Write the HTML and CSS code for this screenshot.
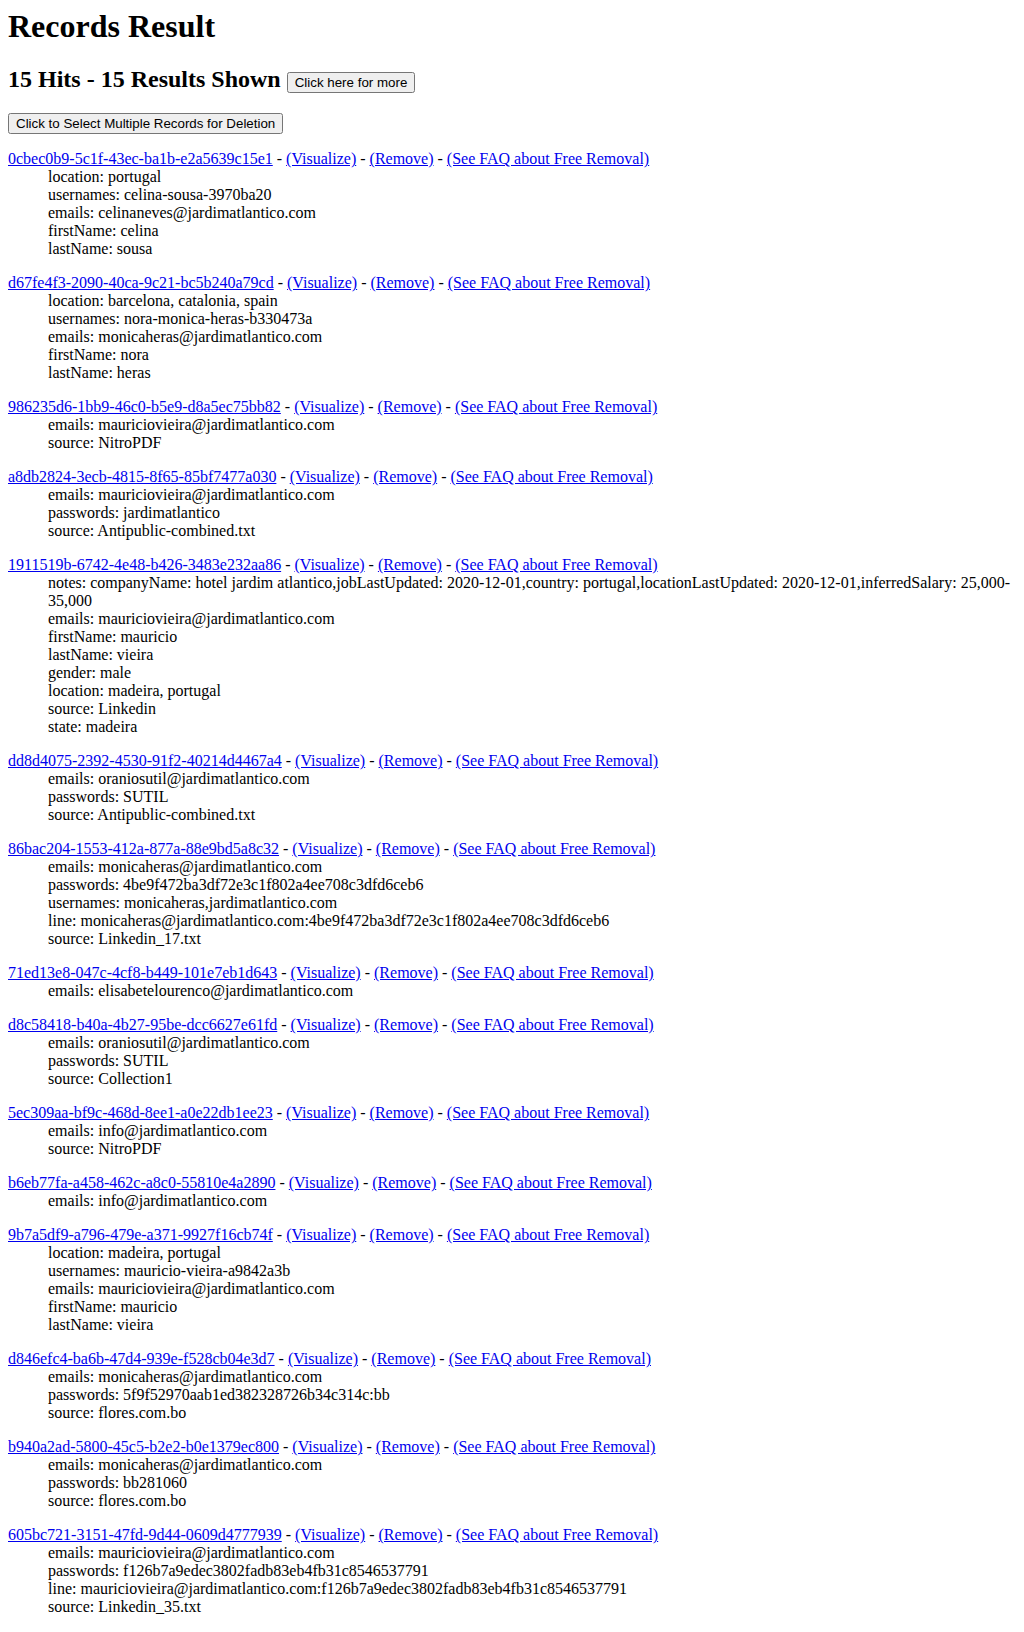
FILE: index.html
```html
<!DOCTYPE html>
<html>
<head>
<meta charset="utf-8">
<title>Records Result</title>
<link rel="stylesheet" href="styles.css">
</head>
<body>
<h1 class="title">Records Result</h1>
<h2 class="hits">15 Hits - 15 Results Shown <button class="btn">Click here for more</button></h2>
<div class="actions"><button class="btn">Click to Select Multiple Records for Deletion</button></div>

<dl class="record">
<dt><a href="#">0cbec0b9-5c1f-43ec-ba1b-e2a5639c15e1</a> - <a href="#">(Visualize)</a> - <a href="#">(Remove)</a> - <a href="#">(See FAQ about Free Removal)</a></dt>
<dd>location: portugal</dd>
<dd>usernames: celina-sousa-3970ba20</dd>
<dd>emails: celinaneves@jardimatlantico.com</dd>
<dd>firstName: celina</dd>
<dd>lastName: sousa</dd>
</dl>

<dl class="record">
<dt><a href="#">d67fe4f3-2090-40ca-9c21-bc5b240a79cd</a> - <a href="#">(Visualize)</a> - <a href="#">(Remove)</a> - <a href="#">(See FAQ about Free Removal)</a></dt>
<dd>location: barcelona, catalonia, spain</dd>
<dd>usernames: nora-monica-heras-b330473a</dd>
<dd>emails: monicaheras@jardimatlantico.com</dd>
<dd>firstName: nora</dd>
<dd>lastName: heras</dd>
</dl>

<dl class="record">
<dt><a href="#">986235d6-1bb9-46c0-b5e9-d8a5ec75bb82</a> - <a href="#">(Visualize)</a> - <a href="#">(Remove)</a> - <a href="#">(See FAQ about Free Removal)</a></dt>
<dd>emails: mauriciovieira@jardimatlantico.com</dd>
<dd>source: NitroPDF</dd>
</dl>

<dl class="record">
<dt><a href="#">a8db2824-3ecb-4815-8f65-85bf7477a030</a> - <a href="#">(Visualize)</a> - <a href="#">(Remove)</a> - <a href="#">(See FAQ about Free Removal)</a></dt>
<dd>emails: mauriciovieira@jardimatlantico.com</dd>
<dd>passwords: jardimatlantico</dd>
<dd>source: Antipublic-combined.txt</dd>
</dl>

<dl class="record">
<dt><a href="#">1911519b-6742-4e48-b426-3483e232aa86</a> - <a href="#">(Visualize)</a> - <a href="#">(Remove)</a> - <a href="#">(See FAQ about Free Removal)</a></dt>
<dd>notes: companyName: hotel jardim atlantico,jobLastUpdated: 2020-12-01,country: portugal,locationLastUpdated: 2020-12-01,inferredSalary: 25,000-35,000</dd>
<dd>emails: mauriciovieira@jardimatlantico.com</dd>
<dd>firstName: mauricio</dd>
<dd>lastName: vieira</dd>
<dd>gender: male</dd>
<dd>location: madeira, portugal</dd>
<dd>source: Linkedin</dd>
<dd>state: madeira</dd>
</dl>

<dl class="record">
<dt><a href="#">dd8d4075-2392-4530-91f2-40214d4467a4</a> - <a href="#">(Visualize)</a> - <a href="#">(Remove)</a> - <a href="#">(See FAQ about Free Removal)</a></dt>
<dd>emails: oraniosutil@jardimatlantico.com</dd>
<dd>passwords: SUTIL</dd>
<dd>source: Antipublic-combined.txt</dd>
</dl>

<dl class="record">
<dt><a href="#">86bac204-1553-412a-877a-88e9bd5a8c32</a> - <a href="#">(Visualize)</a> - <a href="#">(Remove)</a> - <a href="#">(See FAQ about Free Removal)</a></dt>
<dd>emails: monicaheras@jardimatlantico.com</dd>
<dd>passwords: 4be9f472ba3df72e3c1f802a4ee708c3dfd6ceb6</dd>
<dd>usernames: monicaheras,jardimatlantico.com</dd>
<dd>line: monicaheras@jardimatlantico.com:4be9f472ba3df72e3c1f802a4ee708c3dfd6ceb6</dd>
<dd>source: Linkedin_17.txt</dd>
</dl>

<dl class="record">
<dt><a href="#">71ed13e8-047c-4cf8-b449-101e7eb1d643</a> - <a href="#">(Visualize)</a> - <a href="#">(Remove)</a> - <a href="#">(See FAQ about Free Removal)</a></dt>
<dd>emails: elisabetelourenco@jardimatlantico.com</dd>
</dl>

<dl class="record">
<dt><a href="#">d8c58418-b40a-4b27-95be-dcc6627e61fd</a> - <a href="#">(Visualize)</a> - <a href="#">(Remove)</a> - <a href="#">(See FAQ about Free Removal)</a></dt>
<dd>emails: oraniosutil@jardimatlantico.com</dd>
<dd>passwords: SUTIL</dd>
<dd>source: Collection1</dd>
</dl>

<dl class="record">
<dt><a href="#">5ec309aa-bf9c-468d-8ee1-a0e22db1ee23</a> - <a href="#">(Visualize)</a> - <a href="#">(Remove)</a> - <a href="#">(See FAQ about Free Removal)</a></dt>
<dd>emails: info@jardimatlantico.com</dd>
<dd>source: NitroPDF</dd>
</dl>

<dl class="record">
<dt><a href="#">b6eb77fa-a458-462c-a8c0-55810e4a2890</a> - <a href="#">(Visualize)</a> - <a href="#">(Remove)</a> - <a href="#">(See FAQ about Free Removal)</a></dt>
<dd>emails: info@jardimatlantico.com</dd>
</dl>

<dl class="record">
<dt><a href="#">9b7a5df9-a796-479e-a371-9927f16cb74f</a> - <a href="#">(Visualize)</a> - <a href="#">(Remove)</a> - <a href="#">(See FAQ about Free Removal)</a></dt>
<dd>location: madeira, portugal</dd>
<dd>usernames: mauricio-vieira-a9842a3b</dd>
<dd>emails: mauriciovieira@jardimatlantico.com</dd>
<dd>firstName: mauricio</dd>
<dd>lastName: vieira</dd>
</dl>

<dl class="record">
<dt><a href="#">d846efc4-ba6b-47d4-939e-f528cb04e3d7</a> - <a href="#">(Visualize)</a> - <a href="#">(Remove)</a> - <a href="#">(See FAQ about Free Removal)</a></dt>
<dd>emails: monicaheras@jardimatlantico.com</dd>
<dd>passwords: 5f9f52970aab1ed382328726b34c314c:bb</dd>
<dd>source: flores.com.bo</dd>
</dl>

<dl class="record">
<dt><a href="#">b940a2ad-5800-45c5-b2e2-b0e1379ec800</a> - <a href="#">(Visualize)</a> - <a href="#">(Remove)</a> - <a href="#">(See FAQ about Free Removal)</a></dt>
<dd>emails: monicaheras@jardimatlantico.com</dd>
<dd>passwords: bb281060</dd>
<dd>source: flores.com.bo</dd>
</dl>

<dl class="record">
<dt><a href="#">605bc721-3151-47fd-9d44-0609d4777939</a> - <a href="#">(Visualize)</a> - <a href="#">(Remove)</a> - <a href="#">(See FAQ about Free Removal)</a></dt>
<dd>emails: mauriciovieira@jardimatlantico.com</dd>
<dd>passwords: f126b7a9edec3802fadb83eb4fb31c8546537791</dd>
<dd>line: mauriciovieira@jardimatlantico.com:f126b7a9edec3802fadb83eb4fb31c8546537791</dd>
<dd>source: Linkedin_35.txt</dd>
</dl>
</body>
</html>
```

FILE: styles.css
```css
body {
  margin: 8px;
  font-family: "Liberation Serif", "Times New Roman", serif;
  font-size: 16px;
  color: #000;
  background: #fff;
}

.title {
  margin-top: 0;
  font-size: 32px;
}

.hits {
  font-size: 24px;
}

.btn {
  font-family: "Liberation Sans", Arial, sans-serif;
  font-size: 13.333px;
}

.record dt a,
.record a {
  color: #0000ee;
}

.record dd {
  margin-left: 40px;
}
```
